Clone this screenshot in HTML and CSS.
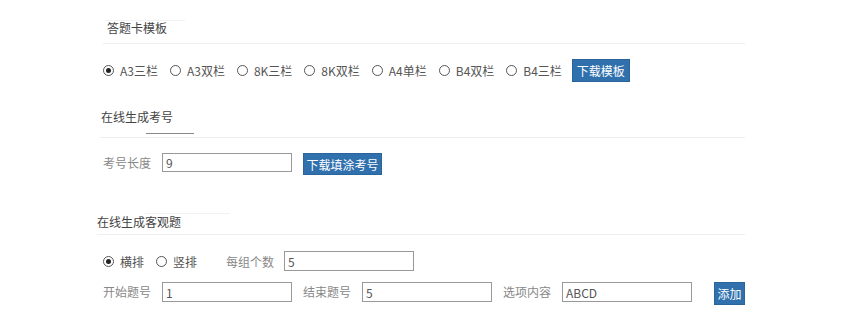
FILE: index.html
```html
<!DOCTYPE html>
<html lang="zh-CN">
<head>
    <meta charset="UTF-8">
    <meta name="viewport" content="width=device-width, initial-scale=1.0">
    <title>答题卡工具</title>
    <link rel="stylesheet" href="styles.css">
</head>
<body>
    <div class="page">
        <div class="panel panel-template">
            <div class="tab-mark mark-1"></div>
            <div class="panel-title">答题卡模板</div>
            <div class="row row-template">
                <label class="choice"><span class="radio checked"></span>A3三栏</label>
                <label class="choice"><span class="radio"></span>A3双栏</label>
                <label class="choice"><span class="radio"></span>8K三栏</label>
                <label class="choice"><span class="radio"></span>8K双栏</label>
                <label class="choice"><span class="radio"></span>A4单栏</label>
                <label class="choice"><span class="radio"></span>B4双栏</label>
                <label class="choice choice-end"><span class="radio"></span>B4三栏</label>
                <button class="btn btn-template">下载模板</button>
            </div>
        </div>

        <div class="panel panel-number">
            <div class="panel-title title-number">
                在线生成考号
                <div class="tab-bar"></div>
            </div>
            <div class="row row-number">
                <span class="field-label">考号长度</span>
                <input class="field" type="text" value="9">
                <button class="btn btn-number">下载填涂考号</button>
            </div>
        </div>

        <div class="panel panel-objective">
            <div class="tab-mark mark-3"></div>
            <div class="panel-title title-objective">在线生成客观题</div>
            <div class="row row-layout">
                <label class="choice"><span class="radio checked"></span>横排</label>
                <label class="choice choice-last"><span class="radio"></span>竖排</label>
                <span class="field-label">每组个数</span>
                <input class="field" type="text" value="5">
            </div>
            <div class="row row-range">
                <span class="field-label">开始题号</span>
                <input class="field" type="text" value="1">
                <span class="field-label">结束题号</span>
                <input class="field" type="text" value="5">
                <span class="field-label">选项内容</span>
                <input class="field" type="text" value="ABCD">
                <button class="btn btn-add">添加</button>
            </div>
        </div>
    </div>
</body>
</html>
```

FILE: styles.css
```css
body {
    margin: 0;
    background-color: #fff;
    font-family: "Noto Sans CJK SC", "Noto Sans", sans-serif;
    font-size: 12px;
    color: #555;
}

.page {
    width: 648px;
    margin-left: 97px;
    overflow: hidden;
}

.panel-template {
    margin-left: 6px;
}

.panel-number {
    margin-left: 3px;
}

.tab-mark {
    height: 1px;
    background-color: #f2f2f2;
}

.mark-1 {
    width: 80px;
    margin: 20px 0 0 2px;
}

.mark-3 {
    width: 85px;
    margin: 38px 0 0 48px;
}

.panel-title {
    line-height: 16px;
    color: #444;
    padding-bottom: 7px;
    border-bottom: 1px solid #eee;
}

.panel-template .panel-title {
    margin-top: -1px;
    padding-left: 4px;
}

.title-number {
    margin-top: 27px;
    padding-left: 1px;
    padding-bottom: 3px;
}

.tab-bar {
    width: 48px;
    height: 1px;
    margin: 8px 0 0 45px;
    background-color: #888;
}

.title-objective {
    padding-bottom: 4px;
}

.row {
    display: flex;
    align-items: center;
}

.row-template {
    margin-top: 15px;
    height: 23px;
}

.choice {
    display: flex;
    align-items: center;
    margin-right: 12px;
    color: #555;
    white-space: nowrap;
}

.choice-end {
    margin-right: 10px;
}

.radio {
    width: 9px;
    height: 9px;
    border: 1px solid #555;
    border-radius: 50%;
    margin-right: 6px;
    display: flex;
    align-items: center;
    justify-content: center;
}

.radio.checked::after {
    content: "";
    width: 5px;
    height: 5px;
    border-radius: 50%;
    background-color: #222;
}

.btn {
    background-color: #2f70ad;
    border: 1px solid #2a649b;
    color: #fff;
    font-family: inherit;
    font-size: 12px;
    padding: 0;
    cursor: pointer;
}

.btn-template {
    width: 58px;
    height: 23px;
}

.row-number {
    margin-top: 15px;
    padding-left: 3px;
    align-items: flex-start;
}

.row-number .field-label {
    line-height: 19px;
}

.field-label {
    width: 48px;
    flex-shrink: 0;
    color: #888;
    white-space: nowrap;
    margin-right: 11px;
}

.field {
    box-sizing: border-box;
    flex-shrink: 0;
    width: 130px;
    height: 20px;
    border: 1px solid #999;
    padding: 0 3px;
    font-family: inherit;
    font-size: 12px;
    color: #555;
    margin: 0;
}

.row-number .field {
    height: 19px;
}

.btn-number {
    width: 79px;
    height: 22px;
    margin-left: 11px;
}

.row-layout {
    margin-top: 16px;
    height: 20px;
    padding-left: 6px;
}

.choice-last {
    margin-right: 29px;
}

.row-layout .field-label {
    margin-right: 10px;
}

.row-range {
    margin-top: 11px;
    padding-left: 6px;
    align-items: flex-start;
}

.row-range .field-label {
    line-height: 20px;
}

.row-range .field {
    margin-right: 11px;
}

.btn-add {
    flex-shrink: 0;
    width: 31px;
    height: 23px;
    margin-left: 11px;
}
```
